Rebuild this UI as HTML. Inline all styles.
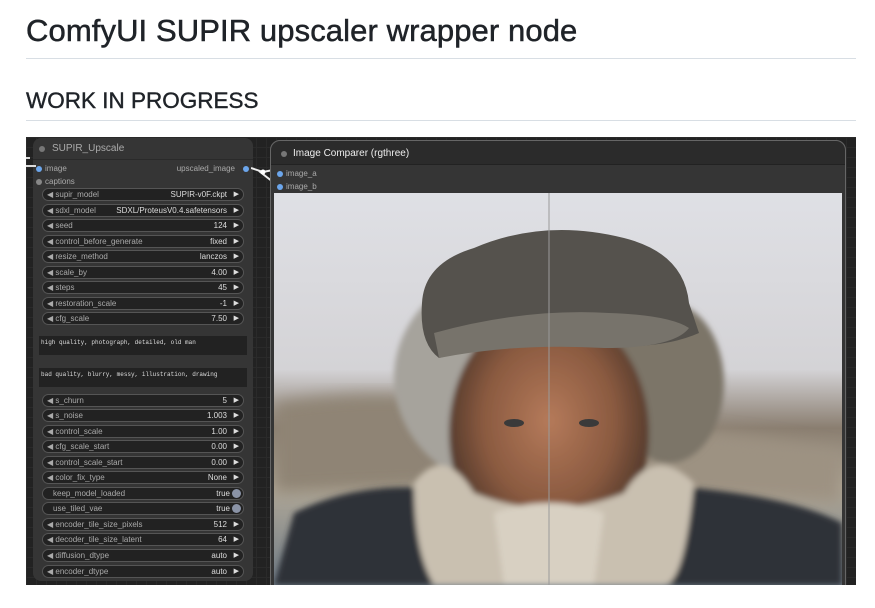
<!DOCTYPE html>
<html><head><meta charset="utf-8"><style>
*{margin:0;padding:0;box-sizing:border-box}
body{width:875px;height:608px;background:#fff;position:relative;overflow:hidden;font-family:"Liberation Sans",sans-serif}
h1{position:absolute;left:26px;top:13px;font-size:31px;font-weight:400;color:#1f2328;letter-spacing:0.1px;-webkit-text-stroke:0.5px #1f2328}
h2{position:absolute;left:26px;top:88px;font-size:22.5px;font-weight:400;color:#1f2328;-webkit-text-stroke:0.4px #1f2328}
.hr{position:absolute;left:26px;width:830px;height:1px;background:#d8dee4}
#canvas{position:absolute;left:26px;top:137px;width:830px;height:448px;overflow:hidden;background:#222;
background-image:linear-gradient(#2a2a2a 1px,transparent 1px),linear-gradient(90deg,#2a2a2a 1px,transparent 1px);background-size:10px 10px}
.node{position:absolute;background:#353535;border-radius:8px}
.title{color:#aaa;font-size:10px;position:absolute}
.dot{position:absolute;width:6px;height:6px;border-radius:50%}
.w{position:absolute;left:9px;width:202px;height:13px;border:1px solid #555;border-radius:7px;background:#222;color:#aaa;font-size:8px;line-height:11px}
.w .l{position:absolute;left:4px}
.w .v{position:absolute;right:16px;color:#ddd}
.w .a{position:absolute;right:4px;color:#ddd;font-size:7px}
.w .k{position:absolute;right:2px;top:1px;width:9px;height:9px;border-radius:50%;background:#8a93a6}
.ta{position:absolute;left:6px;width:208px;height:19px;background:#222;color:#ddd;font-family:"Liberation Mono",monospace;font-size:6px;padding:3px 2px}
.lab{position:absolute;font-size:8px;color:#aaa}
</style></head><body>
<h1>ComfyUI SUPIR upscaler wrapper node</h1>
<div class="hr" style="top:58px"></div>
<h2>WORK IN PROGRESS</h2>
<div class="hr" style="top:120px"></div>
<div id="canvas">
 <div class="node" style="left:7px;top:1px;width:220px;height:443px">
  <div style="position:absolute;left:0;top:0;width:220px;height:22px;border-bottom:1px solid #2a2a2a"></div>
  <div class="dot" style="left:6px;top:8px;background:#777"></div>
  <div class="title" style="left:19px;top:5px">SUPIR_Upscale</div>
  <div class="dot" style="left:3px;top:28px;background:#6ca6ec"></div><div class="lab" style="left:12px;top:26px">image</div>
  <div class="dot" style="left:3px;top:41px;background:#888"></div><div class="lab" style="left:12px;top:39px">captions</div>
  <div class="lab" style="right:18px;top:26px">upscaled_image</div><div class="dot" style="right:4px;top:28px;background:#6ca6ec"></div>
 </div>
 <div style="position:absolute;left:0;top:28px;width:10px;height:2px;background:#ddd"></div>
 <div style="position:absolute;left:0;top:20px;width:4px;height:2px;background:#ddd"></div>
 <svg style="position:absolute;left:225px;top:28px" width="25" height="20"><path d="M0 3 L12 7 L22 5 M8 6 L22 17" stroke="#eee" stroke-width="2" fill="none"/><circle cx="12" cy="7" r="2.5" fill="#fff"/></svg>
 <div class="node" style="left:244px;top:3px;width:576px;height:470px;border:1px solid #666;border-radius:10px;background:#353535">
  <div style="position:absolute;left:0;top:0;width:574px;height:24px;background:#2b2b2b;border-bottom:1px solid #222;border-radius:10px 10px 0 0"></div>
  <div class="dot" style="left:10px;top:10px;background:#777"></div>
  <div class="title" style="left:22px;top:7px;color:#eee">Image Comparer (rgthree)</div>
  <div class="dot" style="left:6px;top:30px;background:#6ca6ec"></div><div class="lab" style="left:15px;top:28px">image_a</div>
  <div class="dot" style="left:6px;top:43px;background:#6ca6ec"></div><div class="lab" style="left:15px;top:41px">image_b</div>
 </div>
 <svg style="position:absolute;left:248px;top:56px" width="568" height="392" viewBox="0 0 568 392">
  <defs>
   <filter id="b"><feGaussianBlur stdDeviation="8"/></filter>
   <filter id="b2"><feGaussianBlur stdDeviation="3"/></filter>
   <linearGradient id="bg" x1="0" y1="0" x2="0" y2="1"><stop offset="0" stop-color="#dfe0e5"/><stop offset=".45" stop-color="#d4d3d6"/><stop offset=".6" stop-color="#8a7e70"/><stop offset=".75" stop-color="#b0a898"/><stop offset="1" stop-color="#6f7b86"/></linearGradient>
   <radialGradient id="face" cx=".5" cy=".45" r=".55"><stop offset="0" stop-color="#b57a5a"/><stop offset=".6" stop-color="#8a5a40"/><stop offset="1" stop-color="#4a3428"/></radialGradient>
  </defs>
  <rect width="568" height="392" fill="url(#bg)"/>
  <g filter="url(#b)">
   <path d="M0 210 Q120 190 220 215 L220 290 L0 300Z" fill="#8f8474"/>
   <path d="M360 230 Q480 240 568 260 L568 310 L360 300Z" fill="#9d9282"/>
  </g>
  <g filter="url(#b2)">
   <path d="M0 392 L20 320 Q80 290 150 295 L420 295 Q520 305 568 330 L568 392Z" fill="#2e3138"/>
   <ellipse cx="250" cy="185" rx="130" ry="115" fill="#a6a39c"/>
   <ellipse cx="395" cy="190" rx="55" ry="80" fill="#7c7468"/>
   <ellipse cx="275" cy="240" rx="100" ry="125" fill="url(#face)"/>
   <path d="M140 290 Q170 250 200 300 Q275 330 350 300 Q380 250 420 290 Q410 392 390 392 L160 392 Q140 360 140 290Z" fill="#c9c0b0"/>
   <path d="M220 320 Q275 300 330 320 L320 392 L230 392Z" fill="#d8d0c2"/>
  </g>
  <path d="M148 110 Q150 70 200 55 Q270 25 350 45 Q410 60 415 110 L425 140 Q380 160 300 150 Q220 150 165 165 Q145 150 148 110Z" fill="#55524d"/>
  <path d="M160 140 Q250 115 335 120 Q395 122 415 135 Q400 155 330 155 Q240 150 165 165Z" fill="#77736b"/>
  <ellipse cx="240" cy="230" rx="10" ry="4" fill="#3a3a3a"/>
  <ellipse cx="315" cy="230" rx="10" ry="4" fill="#3a3a3a"/>
  <line x1="275" y1="0" x2="275" y2="392" stroke="#9a9a9a" stroke-width="1"/>
 </svg>
</div>
<div style="position:absolute;left:33px;top:138px">
 <div class="w" style="top:50px"><span class="l">◀ supir_model</span><span class="v">SUPIR-v0F.ckpt</span><span class="a">▶</span></div>
 <div class="w" style="top:66px"><span class="l">◀ sdxl_model</span><span class="v">SDXL/ProteusV0.4.safetensors</span><span class="a">▶</span></div>
 <div class="w" style="top:81px"><span class="l">◀ seed</span><span class="v">124</span><span class="a">▶</span></div>
 <div class="w" style="top:97px"><span class="l">◀ control_before_generate</span><span class="v">fixed</span><span class="a">▶</span></div>
 <div class="w" style="top:112px"><span class="l">◀ resize_method</span><span class="v">lanczos</span><span class="a">▶</span></div>
 <div class="w" style="top:128px"><span class="l">◀ scale_by</span><span class="v">4.00</span><span class="a">▶</span></div>
 <div class="w" style="top:143px"><span class="l">◀ steps</span><span class="v">45</span><span class="a">▶</span></div>
 <div class="w" style="top:159px"><span class="l">◀ restoration_scale</span><span class="v">-1</span><span class="a">▶</span></div>
 <div class="w" style="top:174px"><span class="l">◀ cfg_scale</span><span class="v">7.50</span><span class="a">▶</span></div>
 <div class="ta" style="top:198px">high quality, photograph, detailed, old man</div>
 <div class="ta" style="top:230px">bad quality, blurry, messy, illustration, drawing</div>
 <div class="w" style="top:256px"><span class="l">◀ s_churn</span><span class="v">5</span><span class="a">▶</span></div>
 <div class="w" style="top:271px"><span class="l">◀ s_noise</span><span class="v">1.003</span><span class="a">▶</span></div>
 <div class="w" style="top:287px"><span class="l">◀ control_scale</span><span class="v">1.00</span><span class="a">▶</span></div>
 <div class="w" style="top:302px"><span class="l">◀ cfg_scale_start</span><span class="v">0.00</span><span class="a">▶</span></div>
 <div class="w" style="top:318px"><span class="l">◀ control_scale_start</span><span class="v">0.00</span><span class="a">▶</span></div>
 <div class="w" style="top:333px"><span class="l">◀ color_fix_type</span><span class="v">None</span><span class="a">▶</span></div>
 <div class="w" style="top:349px"><span class="l" style="left:10px">keep_model_loaded</span><span class="v" style="right:13px">true</span><span class="k"></span></div>
 <div class="w" style="top:364px"><span class="l" style="left:10px">use_tiled_vae</span><span class="v" style="right:13px">true</span><span class="k"></span></div>
 <div class="w" style="top:380px"><span class="l">◀ encoder_tile_size_pixels</span><span class="v">512</span><span class="a">▶</span></div>
 <div class="w" style="top:395px"><span class="l">◀ decoder_tile_size_latent</span><span class="v">64</span><span class="a">▶</span></div>
 <div class="w" style="top:411px"><span class="l">◀ diffusion_dtype</span><span class="v">auto</span><span class="a">▶</span></div>
 <div class="w" style="top:427px"><span class="l">◀ encoder_dtype</span><span class="v">auto</span><span class="a">▶</span></div>
</div>
</body></html>
